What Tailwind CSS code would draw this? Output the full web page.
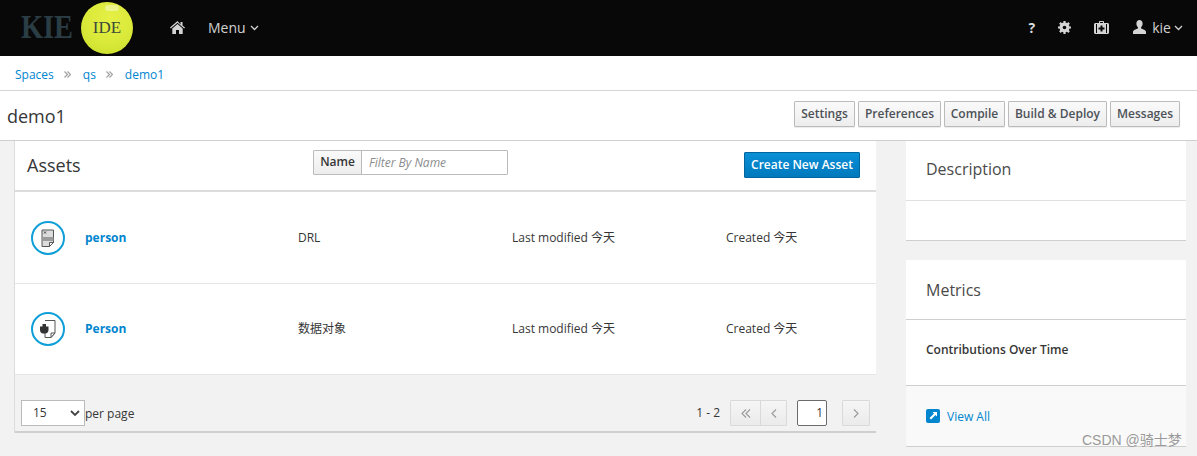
<!DOCTYPE html>
<html lang="en">
  <head>
    <meta charset="UTF-8" />
    <title>KIE IDE</title>
    <script src="https://cdn.jsdelivr.net/npm/@tailwindcss/browser@4"></script>
  </head>
  <body class="relative w-[1197px] h-[456px] overflow-hidden bg-[#f2f2f2] font-['Open_Sans','Noto_Sans_CJK_SC',sans-serif] text-[#363636]">
    <!-- Top nav -->
    <header class="h-14 pb-[2px] bg-[#080808] flex items-center text-[#d1d1d1]">
      <div class="w-[80px] pl-[21px] font-['Liberation_Serif',serif] font-bold text-[33px] leading-none"><span class="block origin-left scale-x-[0.86] text-[#2b3d44]">KIE</span></div>
      <div class="relative w-[52px] h-[52px] rounded-full ml-px mt-[1px] flex items-center justify-center bg-[radial-gradient(circle_at_55%_30%,#e6f045,#d8e838_60%,#c6da28)] font-['Liberation_Serif',serif] text-[17px] text-[#3a4a3a]">
        <span class="absolute left-[24px] top-[3px] w-[14px] h-[6px] rounded-full bg-white/40"></span>
        IDE
      </div>
      <svg class="ml-[37px]" width="15" height="13" viewBox="0 0 15 13"><path fill="#d4d4d4" d="M7.500 0 0 6.600l.8.9L7.500 1.700l6.700 5.800.8-.9-2.500-2.200V1h-2v2.500zM2.300 7.500V13h3.700V9h3v4h3.700V7.500L7.500 3z"/></svg>
      <span class="ml-[23px] text-[14px]">Menu</span>
      <svg class="ml-[4px] mt-[2px]" width="9" height="6" viewBox="0 0 9 6"><path d="M1 1l3.500 3.500L8 1" fill="none" stroke="#d1d1d1" stroke-width="1.300"/></svg>
      <div class="ml-auto flex items-center">
        <span class="text-[14px] font-bold text-[#dcdcdc] mr-[23px]">?</span>
        <svg class="mr-[23px]" width="13" height="13" viewBox="0 0 13 13"><circle cx="6.500" cy="6.500" r="3.700" fill="none" stroke="#d4d4d4" stroke-width="2.600"/><path stroke="#d4d4d4" stroke-width="2.200" d="M6.500 0v13M0 6.500h13M1.900 1.900l9.200 9.200M11.100 1.900l-9.200 9.200"/><circle cx="6.500" cy="6.500" r="1.800" fill="#080808"/></svg>
        <svg class="mr-[24px]" width="15" height="13" viewBox="0 0 15 13"><path fill="#d4d4d4" d="M5 2V.8C5 .300 5.300 0 5.800 0h3.400c.5 0 .8.300.8.800V2h3.500c.8 0 1.500.7 1.500 1.500v8c0 .8-.7 1.500-1.500 1.500h-12C.7 13 0 12.300 0 11.500v-8C0 2.700.7 2 1.500 2zM6 2h3V1H6zM2 3v9h1V3zM12 3v9h1V3zM6.500 4.500v2h-2v2h2v2h2v-2h2v-2h-2v-2z"/></svg>
        <svg class="mr-[6px]" width="13" height="14" viewBox="0 0 13 14"><path fill="#d4d4d4" d="M6.500 0C8.300 0 9.600 1.500 9.600 3.500c0 1.600-.7 3-1.500 3.800v1.200c1.800.7 4.900 1.500 4.900 3.500v2H0v-2c0-2 3.100-2.800 4.900-3.500V7.300C4.100 6.500 3.400 5.100 3.400 3.500 3.400 1.500 4.700 0 6.500 0z"/></svg>
        <span class="text-[14px]">kie</span>
        <svg class="ml-[3px] mr-[14px] mt-[2px]" width="9" height="6" viewBox="0 0 9 6"><path d="M1 1l3.500 3.500L8 1" fill="none" stroke="#d1d1d1" stroke-width="1.300"/></svg>
      </div>
    </header>

    <!-- Breadcrumb -->
    <nav class="h-[35px] pt-[3px] bg-white border-b border-[#d5d5d5] flex items-center pl-[15px] text-[12px] text-[#0085cf]">
      <a>Spaces</a>
      <svg class="ml-[10px] mr-[12px]" width="7" height="7" viewBox="0 0 7 7"><path d="M.5.5l3 3-3 3M3.500.5l3 3-3 3" fill="none" stroke="#a0a0a0" stroke-width="1.200"/></svg>
      <a>qs</a>
      <svg class="ml-[10px] mr-[12px]" width="7" height="7" viewBox="0 0 7 7"><path d="M.5.5l3 3-3 3M3.500.5l3 3-3 3" fill="none" stroke="#a0a0a0" stroke-width="1.200"/></svg>
      <a>demo1</a>
    </nav>

    <!-- Title bar -->
    <div class="h-[50px] bg-white border-b border-[#cfcfcf] flex items-center pl-[7px] pr-[17px]">
      <h1 class="text-[18px] text-[#363636] mt-[2px]">demo1</h1>
      <div class="ml-auto flex gap-[3px] text-[12px] font-semibold text-[#4d5258] -mt-[3px]">
        <button class="h-[26px] w-[61px] border border-[#bbb] rounded-[1px] shadow-[0_1px_1px_rgba(0,0,0,0.08)] bg-linear-to-b from-[#fafafa] to-[#ededed]">Settings</button>
        <button class="h-[26px] w-[83px] border border-[#bbb] rounded-[1px] shadow-[0_1px_1px_rgba(0,0,0,0.08)] bg-linear-to-b from-[#fafafa] to-[#ededed]">Preferences</button>
        <button class="h-[26px] w-[61px] border border-[#bbb] rounded-[1px] shadow-[0_1px_1px_rgba(0,0,0,0.08)] bg-linear-to-b from-[#fafafa] to-[#ededed]">Compile</button>
        <button class="h-[26px] w-[99px] border border-[#bbb] rounded-[1px] shadow-[0_1px_1px_rgba(0,0,0,0.08)] bg-linear-to-b from-[#fafafa] to-[#ededed]">Build &amp; Deploy</button>
        <button class="h-[26px] w-[70px] border border-[#bbb] rounded-[1px] shadow-[0_1px_1px_rgba(0,0,0,0.08)] bg-linear-to-b from-[#fafafa] to-[#ededed]">Messages</button>
      </div>
    </div>

    <div class="flex pl-[15px]">
      <!-- Assets card -->
      <main class="w-[861px] h-[292px] flex flex-col border-b-2 border-[#cfcfcf] shadow-[-1px_0_0_#dcdcdc]">
        <div class="h-[51px] shrink-0 bg-white border-b-2 border-[#dcdcdc] flex items-center pl-[12px] pr-[16px]">
          <h2 class="w-[286px] text-[18px] text-[#363636]">Assets</h2>
          <div class="flex h-[25px] w-[195px] -mt-[7px] border border-[#bbb] rounded-[1px] text-[12px]">
            <span class="w-[48px] bg-linear-to-b from-[#fafafa] to-[#ededed] border-r border-[#bbb] font-semibold text-center leading-[22px]">Name</span>
            <span class="pl-[7px] italic text-[#8b8d8f] leading-[23px]">Filter By Name</span>
          </div>
          <button class="ml-auto w-[116px] h-[26px] -mt-[1px] rounded-[1px] border border-[#00659c] bg-linear-to-b from-[#0a8fd6] to-[#0079bd] text-white text-[12px] font-semibold">Create New Asset</button>
        </div>

        <div class="h-[92px] shrink-0 bg-white border-b border-[#e6e6e6] flex items-center text-[12px]">
          <span class="w-[70px] pl-[16px] shrink-0">
            <svg width="34" height="34" viewBox="0 0 34 34"><circle cx="17" cy="17" r="16" fill="#fff" stroke="#0f9fd8" stroke-width="2"/><path d="M11 9h11.500v12.500l-4 4H11z" fill="#dcdcdc" stroke="#555"/><path fill="#9a9a9a" d="M11 16h11.500v4H11z"/><path d="M13 10.500l2 2M15 10.500l-2 2" stroke="#444"/><path fill="#fff" stroke="#555" d="M18.500 25.500v-4h4z"/></svg>
          </span>
          <a class="w-[213px] font-bold text-[#0085cf]">person</a>
          <span class="w-[214px]">DRL</span>
          <span class="w-[214px]">Last modified 今天</span>
          <span>Created 今天</span>
        </div>

        <div class="h-[91px] shrink-0 bg-white border-b border-[#e6e6e6] flex items-center text-[12px]">
          <span class="w-[70px] pl-[16px] shrink-0">
            <svg width="34" height="34" viewBox="0 0 34 34"><circle cx="17" cy="17" r="16" fill="#fff" stroke="#0f9fd8" stroke-width="2"/><path d="M14 8.500h10v12.500l-4 4.500h-6v-6" fill="#fff" stroke="#555"/><path fill="#fff" stroke="#555" d="M20 25.500V21h4z"/><path fill="#333" d="M9 14.500h8.500v3.500c0 2-1.500 3.500-3 3.500h-2.500c-1.500 0-3-1.500-3-3.500zM11.500 12h3.500v2.500h-3.500z"/></svg>
          </span>
          <a class="w-[213px] font-bold text-[#0085cf]">Person</a>
          <span class="w-[214px]">数据对象</span>
          <span class="w-[214px]">Last modified 今天</span>
          <span>Created 今天</span>
        </div>

        <!-- Pagination -->
        <div class="flex-1 bg-[#f2f2f2] flex items-end pb-[5px] pl-[6px] pr-[6px] text-[12px]">
          <div class="w-[64px] h-[26px] bg-white border border-[#bbb] flex items-center justify-between pl-[11px] pr-[4px]">
            <span>15</span>
            <svg width="10" height="7" viewBox="0 0 10 7"><path d="M1 1l4 4 4-4" fill="none" stroke="#444" stroke-width="1.800"/></svg>
          </div>
          <span class="h-[26px] leading-[27px]">per page</span>
          <span class="ml-auto h-[26px] leading-[26px]">1 - 2</span>
          <div class="ml-[10px] flex h-[26px] w-[57px] border border-[#d9d9d9] rounded-[1px] bg-linear-to-b from-[#f5f5f5] to-[#ebebeb] text-[#9a9a9a]">
            <span class="w-[30px] border-r border-[#d9d9d9] flex items-center justify-center">
              <svg width="10" height="9" viewBox="0 0 10 9"><path d="M5 .5l-4 4 4 4M9 .5l-4 4 4 4" fill="none" stroke="#9a9a9a" stroke-width="1.100"/></svg>
            </span>
            <span class="flex-1 flex items-center justify-center">
              <svg width="6" height="9" viewBox="0 0 6 9"><path d="M5 .5l-4 4 4 4" fill="none" stroke="#9a9a9a" stroke-width="1.100"/></svg>
            </span>
          </div>
          <div class="ml-[10px] w-[30px] h-[26px] bg-white border border-[#6b6b6b] rounded-[2px] text-right pr-[3px] leading-[24px]">1</div>
          <div class="ml-[15px] w-[28px] h-[26px] border border-[#d9d9d9] rounded-[1px] bg-linear-to-b from-[#f5f5f5] to-[#ebebeb] flex items-center justify-center">
            <svg width="6" height="9" viewBox="0 0 6 9"><path d="M1 .5l4 4-4 4" fill="none" stroke="#9a9a9a" stroke-width="1.100"/></svg>
          </div>
        </div>
      </main>

      <!-- Right column -->
      <aside class="ml-[30px] w-[280px] flex flex-col gap-[19px]">
        <section class="h-[100px] bg-white border-b border-[#cfcfcf]">
          <h3 class="h-[60px] border-b border-[#e0e0e0] pl-[20px] pt-[17px] text-[16px] leading-[22px] text-[#4a4a4a]">Description</h3>
        </section>
        <section class="h-[187px] flex flex-col bg-white border-b border-[#cfcfcf]">
          <h3 class="h-[60px] shrink-0 border-b border-[#cfcfcf] pl-[20px] pt-[19px] text-[16px] leading-[22px] text-[#4a4a4a]">Metrics</h3>
          <div class="h-[66px] shrink-0 border-b border-[#cfcfcf] pl-[20px] pt-[21px] text-[12px] font-semibold text-[#363636]">Contributions Over Time</div>
          <div class="flex-1 bg-[#f9f9f9] pl-[20px] pt-[22px] flex items-start text-[12px] text-[#0085cf]">
            <svg class="mt-[1px]" width="14" height="14" viewBox="0 0 14 14"><rect width="14" height="14" rx="2" fill="#0085cf"/><path fill="#fff" d="M6.500 3H11v4.500L9.500 6 5 10.500 3.500 9 8 4.500z"/></svg>
            <a class="ml-[7px]">View All</a>
          </div>
        </section>
      </aside>
    </div>

    <!-- Watermark over the page -->
    <span class="absolute left-[1082px] top-[431px] text-[14px] leading-[18px] text-[#9a9a9a] font-['Liberation_Sans','Noto_Sans_CJK_SC',sans-serif]">CSDN @骑士梦</span>
  </body>
</html>
